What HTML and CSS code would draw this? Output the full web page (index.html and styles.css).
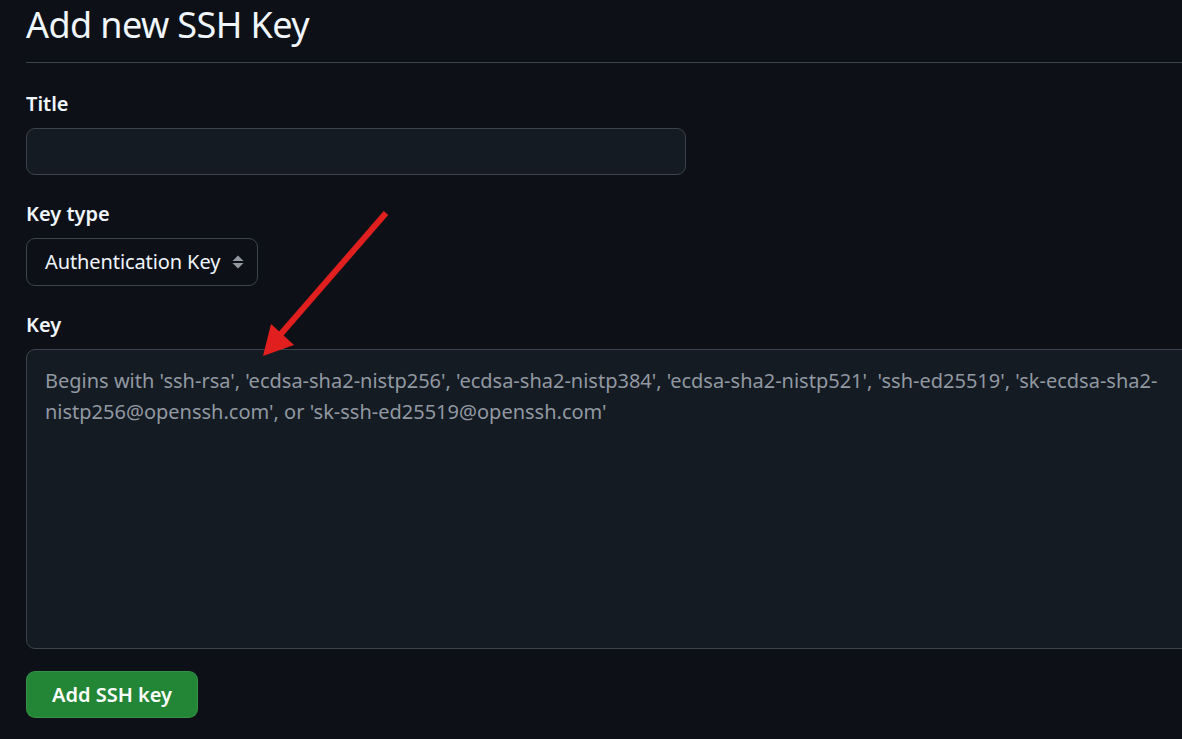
FILE: index.html
```html
<!DOCTYPE html>
<html lang="en">
<head>
<meta charset="utf-8">
<title>Add new SSH Key</title>
<link rel="stylesheet" href="styles.css">
</head>
<body>
<div class="page">
  <div class="subhead">
    <h1 class="subhead-title">Add new SSH Key</h1>
  </div>
  <form class="form">
    <div class="field">
      <label class="label" for="title">Title</label>
      <input class="input" id="title" type="text">
    </div>
    <div class="field">
      <label class="label">Key type</label>
      <div class="select">
        <span class="select-text">Authentication Key</span>
        <svg class="select-caret" width="12" height="14" viewBox="0 0 12 14" aria-hidden="true">
          <path d="M6 0.5 L11.5 6 H0.5 Z" fill="#9198a1"/>
          <path d="M0.5 8 H11.5 L6 13.5 Z" fill="#9198a1"/>
        </svg>
      </div>
    </div>
    <div class="field">
      <label class="label" for="key">Key</label>
      <textarea class="textarea" id="key" placeholder="Begins with 'ssh-rsa', 'ecdsa-sha2-nistp256', 'ecdsa-sha2-nistp384', 'ecdsa-sha2-nistp521', 'ssh-ed25519', 'sk-ecdsa-sha2-nistp256@openssh.com', or 'sk-ssh-ed25519@openssh.com'"></textarea>
    </div>
    <div class="actions">
      <button class="btn-primary" type="button">Add SSH key</button>
    </div>
  </form>
  <svg class="annotation" width="1182" height="739" viewBox="0 0 1182 739" aria-hidden="true">
    <line x1="386" y1="213" x2="280" y2="335" stroke="#e21f1f" stroke-width="6" stroke-linecap="butt"/>
    <polygon points="263,356 271,324 294,345" fill="#e21f1f"/>
  </svg>
</div>
</body>
</html>
```

FILE: styles.css
```css
html, body {
  margin: 0;
  padding: 0;
  background: #0d1117;
  overflow: hidden;
}

body {
  font-family: "Noto Sans", "Open Sans", sans-serif;
  color: #f0f6fc;
  width: 1182px;
  height: 739px;
}

.page {
  position: relative;
  width: 1182px;
  height: 739px;
  padding-left: 26px;
  box-sizing: border-box;
}

.subhead {
  border-bottom: 1px solid #3d444d;
  padding-top: 2px;
  padding-bottom: 14px;
  margin-right: -10px;
}

.subhead-title {
  margin: 0;
  font-size: 36px;
  font-weight: 400;
  line-height: 46px;
  letter-spacing: -0.6px;
}

.form {
  display: flex;
  flex-direction: column;
  gap: 22px;
  padding-top: 24px;
}

.field {
  display: flex;
  flex-direction: column;
  align-items: flex-start;
  gap: 9px;
}

.label {
  font-size: 20px;
  font-weight: 600;
  line-height: 30px;
  padding-top: 2px;
}

.input {
  box-sizing: border-box;
  width: 660px;
  height: 47px;
  background: #151b23;
  border: 1px solid #3d444d;
  border-radius: 9px;
  color: #f0f6fc;
  font: inherit;
  font-size: 20px;
  padding: 0 18px;
  outline: none;
}

.select {
  box-sizing: border-box;
  width: 232px;
  height: 48px;
  display: flex;
  align-items: center;
  justify-content: space-between;
  padding: 0 13px 0 18px;
  background: #0d1117;
  border: 1px solid #3d444d;
  border-radius: 9px;
}

.select-text {
  font-size: 20px;
  line-height: 30px;
  color: #f0f6fc;
  letter-spacing: -0.1px;
}

.select-caret {
  display: block;
}

.textarea {
  box-sizing: border-box;
  width: 1200px;
  height: 300px;
  background: #151b23;
  border: 1px solid #3d444d;
  border-radius: 9px;
  color: #f0f6fc;
  font: inherit;
  font-size: 20px;
  line-height: 31px;
  padding: 15px 18px;
  resize: none;
  outline: none;
}

.textarea::placeholder {
  color: #9198a1;
  opacity: 1;
}

.actions {
  display: flex;
}

.btn-primary {
  box-sizing: border-box;
  width: 172px;
  height: 47px;
  background: #238636;
  color: #ffffff;
  border: 1px solid rgba(240, 246, 252, 0.1);
  border-radius: 9px;
  font-family: inherit;
  font-size: 20px;
  font-weight: 600;
  padding: 0;
}

.annotation {
  position: absolute;
  left: 0;
  top: 0;
  pointer-events: none;
}
```
